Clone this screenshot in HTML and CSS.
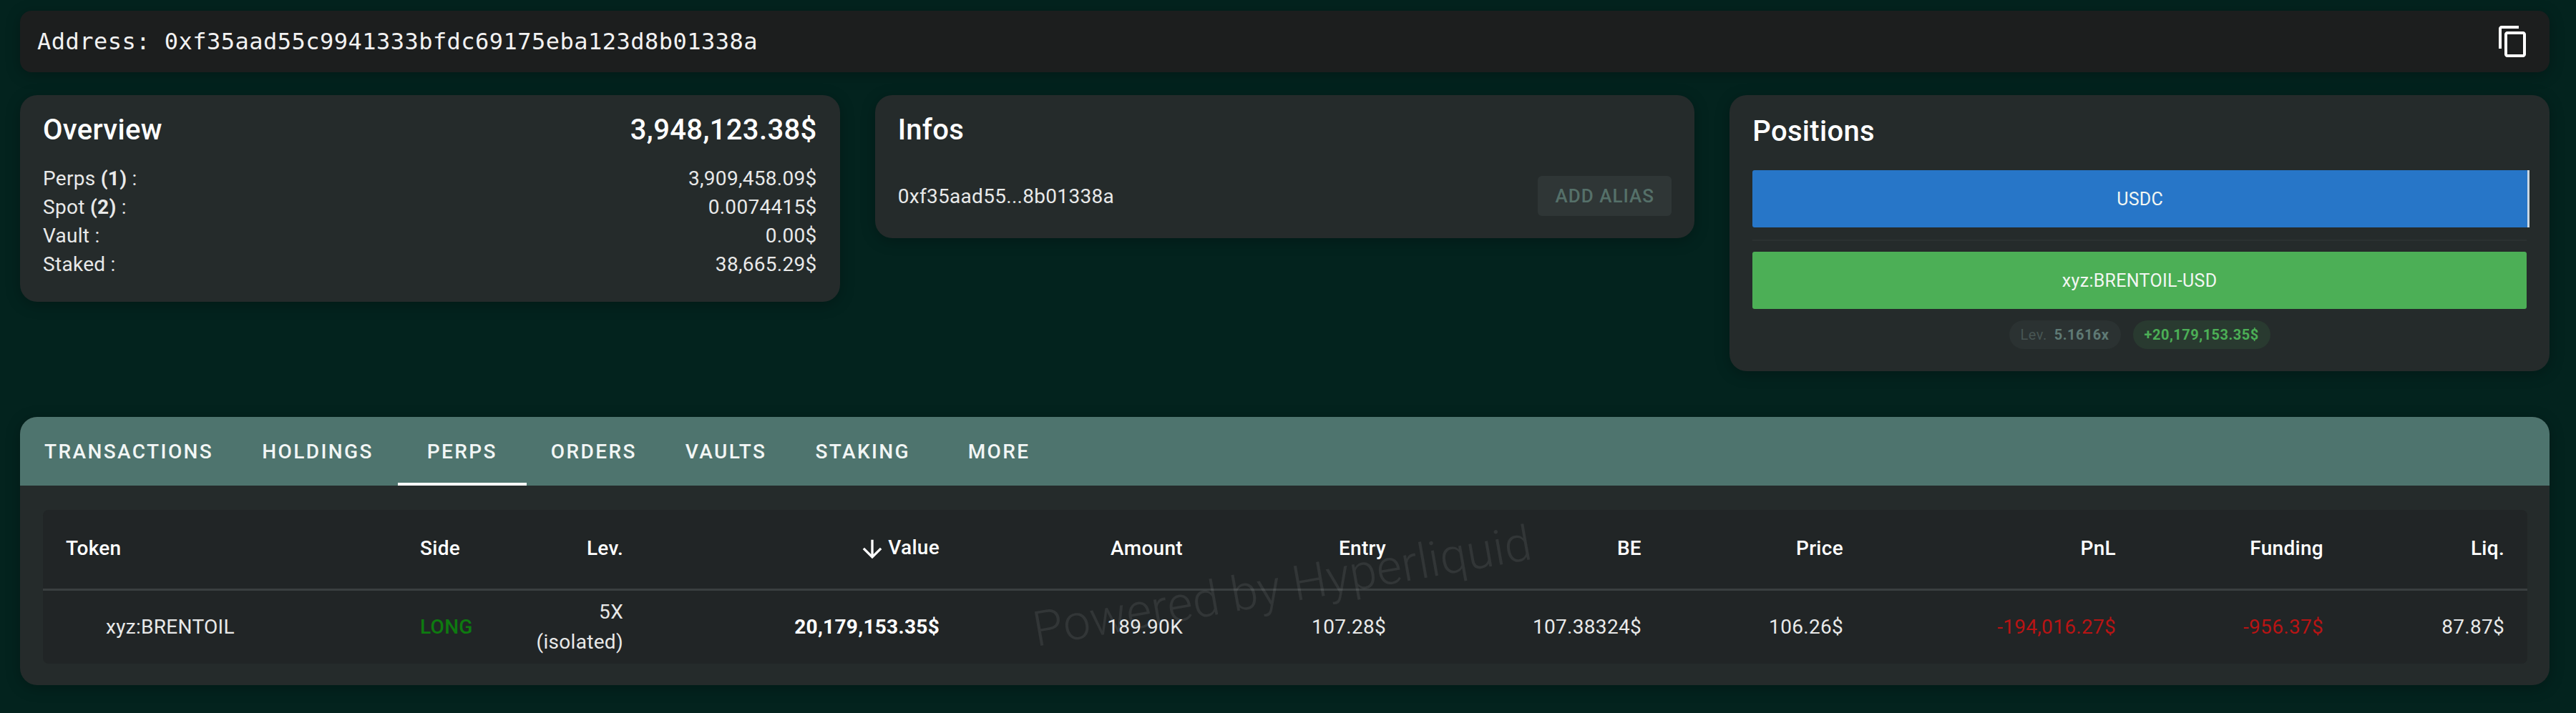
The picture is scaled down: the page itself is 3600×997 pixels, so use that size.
FILE: index.html
```html
<!DOCTYPE html>
<html lang="en">
<head>
  <meta charset="UTF-8">
  <title>Address overview</title>
  <link rel="stylesheet" href="styles.css">
</head>
<body>

<div class="address-bar">
  <span class="address-text">Address: 0xf35aad55c9941333bfdc69175eba123d8b01338a</span>
  <svg class="copy-icon" viewBox="0 0 24 24"><path d="M16 1H4c-1.1 0-2 .9-2 2v14h2V3h12V1zm3 4H8c-1.1 0-2 .9-2 2v14c0 1.1.9 2 2 2h11c1.1 0 2-.9 2-2V7c0-1.1-.9-2-2-2zm0 16H8V7h11v14z"/></svg>
</div>

<div class="panels">
  <div class="card overview">
    <div class="card-head">
      <h2>Overview</h2>
      <span class="total">3,948,123.38$</span>
    </div>
    <div class="stat"><span>Perps <b>(1)</b> :</span><span>3,909,458.09$</span></div>
    <div class="stat"><span>Spot <b>(2)</b> :</span><span>0.0074415$</span></div>
    <div class="stat"><span>Vault :</span><span>0.00$</span></div>
    <div class="stat"><span>Staked :</span><span>38,665.29$</span></div>
  </div>

  <div class="card infos">
    <div class="card-head">
      <h2>Infos</h2>
    </div>
    <div class="info-row">
      <span>0xf35aad55...8b01338a</span>
      <button class="alias-btn">Add alias</button>
    </div>
  </div>

  <div class="card positions">
    <h2>Positions</h2>
    <div class="stack">
      <div class="seg seg-blue">USDC</div>
      <div class="seg-end"></div>
    </div>
    <div class="bar-divider"></div>
    <div class="seg seg-green">xyz:BRENTOIL-USD</div>
    <div class="pills">
      <span class="pill"><span class="pill-label">Lev.</span> <b>5.1616x</b></span>
      <span class="pill pill-green"><b>+20,179,153.35$</b></span>
    </div>
  </div>
</div>

<div class="details">
  <div class="tabs">
    <button class="tab">Transactions</button>
    <button class="tab">Holdings</button>
    <button class="tab active">Perps</button>
    <button class="tab">Orders</button>
    <button class="tab">Vaults</button>
    <button class="tab">Staking</button>
    <button class="tab">More</button>
  </div>

  <div class="table-wrap">
    <table>
      <colgroup>
        <col class="col-token">
        <col class="col-side">
        <col class="col-lev">
        <col class="col-value">
        <col class="col-amount">
        <col class="col-entry">
        <col class="col-be">
        <col class="col-price">
        <col class="col-pnl">
        <col class="col-funding">
        <col class="col-liq">
      </colgroup>
      <thead>
        <tr>
          <th class="left">Token</th>
          <th class="left">Side</th>
          <th>Lev.</th>
          <th><svg class="sort-icon" viewBox="0 0 24 24"><path d="M20 12l-1.41-1.41L13 16.17V4h-2v12.17l-5.58-5.59L4 12l8 8 8-8z"/></svg>Value</th>
          <th>Amount</th>
          <th>Entry</th>
          <th>BE</th>
          <th>Price</th>
          <th>PnL</th>
          <th>Funding</th>
          <th>Liq.</th>
        </tr>
      </thead>
      <tbody>
        <tr>
          <td class="left token-name">xyz:BRENTOIL</td>
          <td class="left long">LONG</td>
          <td>5X<br>(isolated)</td>
          <td class="strong">20,179,153.35$</td>
          <td>189.90K</td>
          <td>107.28$</td>
          <td>107.38324$</td>
          <td>106.26$</td>
          <td class="neg">-194,016.27$</td>
          <td class="neg">-956.37$</td>
          <td>87.87$</td>
        </tr>
      </tbody>
    </table>
    <div class="watermark">Powered by Hyperliquid</div>
  </div>
</div>

</body>
</html>
```

FILE: styles.css
```css
* {
  box-sizing: border-box;
}

body {
  margin: 0;
  padding: 15px 37px 0 28px;
  height: 997px;
  overflow: hidden;
  background-color: #03231e;
  color: #fff;
  font-family: Roboto, "Liberation Sans", sans-serif;
  font-size: 28px;
  letter-spacing: 0.3px;
}

h2 {
  margin: 0;
  font-size: 40px;
  line-height: 48px;
  font-weight: 500;
  letter-spacing: 0.3px;
}

.address-bar {
  display: flex;
  justify-content: space-between;
  align-items: center;
  height: 86px;
  padding: 0 27px 0 24px;
  margin-bottom: 32px;
  background: #1c1e1e;
  border-radius: 16px;
  box-shadow: 0 4px 20px rgba(0,0,0,0.25);
}

.address-text {
  font-family: "DejaVu Sans Mono", monospace;
  font-size: 32px;
  letter-spacing: 0.48px;
  color: #f2f2f2;
}

.copy-icon {
  width: 48px;
  height: 48px;
  fill: #fff;
}

.panels {
  display: grid;
  grid-template-columns: repeat(3, 1fr);
  gap: 49px;
  align-items: start;
  margin-bottom: 64px;
}

.card {
  background: #252b2b;
  border-radius: 24px;
  padding: 25px 32px 32px;
  box-shadow: 0 4px 20px rgba(0,0,0,0.25);
}

.card-head {
  display: flex;
  justify-content: space-between;
  align-items: center;
}

.total {
  font-size: 40px;
  line-height: 48px;
  font-weight: 500;
  letter-spacing: 0.35px;
}

.overview .card-head {
  margin-bottom: 24px;
}

.stat {
  display: flex;
  justify-content: space-between;
  line-height: 40px;
  color: #e8e9e9;
}

.stat b {
  font-weight: 700;
}

.infos {
  padding-bottom: 31px;
}

.infos .card-head {
  margin-bottom: 40px;
}

.info-row {
  display: flex;
  justify-content: space-between;
  align-items: center;
  color: #e8e9e9;
}

.alias-btn {
  width: 187px;
  height: 56px;
  padding: 0;
  border: 0;
  border-radius: 6px;
  background: #2f3636;
  color: #557069;
  font-family: inherit;
  font-size: 26px;
  font-weight: 500;
  letter-spacing: 1px;
  text-transform: uppercase;
}

.positions {
  padding: 27px 32px 31px;
}

.stack {
  display: flex;
  height: 80px;
  margin: 30px -4px 0 0;
}

.seg {
  display: flex;
  justify-content: center;
  align-items: center;
  height: 80px;
  font-size: 25px;
  border-radius: 3px;
  color: #f2f6f2;
}

.seg-blue {
  flex: 1;
  background: #2776c8;
  border-radius: 3px 0 0 3px;
}

.seg-end {
  width: 3px;
  background: #c9d6e2;
}

.seg-green {
  background: #4caf56;
}

.bar-divider {
  height: 2px;
  margin: 17px 0 15px;
  background: #2b3131;
}

.pills {
  display: flex;
  justify-content: center;
  gap: 17px;
  margin-top: 16px;
  font-size: 20px;
}

.pill {
  display: flex;
  align-items: center;
  gap: 10px;
  height: 40px;
  padding: 0 16px;
  border-radius: 20px;
  background: #2b3232;
  color: #5f7a75;
  letter-spacing: 0.5px;
}

.pill-label {
  color: #485654;
}

.pill-green {
  background: #293a30;
  color: #4caf56;
}

.details {
  padding-bottom: 30px;
  background: #252b2b;
  border-radius: 24px;
  overflow: hidden;
  box-shadow: 0 4px 20px rgba(0,0,0,0.25);
}

.tabs {
  display: flex;
  height: 96px;
  margin-bottom: 34px;
  background: #4e746e;
}

.tab {
  min-width: 180px;
  height: 96px;
  padding: 4px 34px 0;
  border: 0;
  border-bottom: 4px solid transparent;
  background: none;
  color: #f2f6f5;
  font-family: inherit;
  font-size: 28px;
  font-weight: 500;
  letter-spacing: 2.4px;
  text-transform: uppercase;
}

.tab.active {
  border-bottom-color: #fff;
}

.table-wrap {
  position: relative;
  margin: 0 31px 0 32px;
  background: #212526;
  border-radius: 8px;
}

table {
  width: 100%;
  table-layout: fixed;
  border-collapse: collapse;
}

.col-token { width: 495px; }
.col-side { width: 145px; }
.col-lev { width: 203px; }
.col-value { width: 442px; }
.col-amount { width: 340px; }
.col-entry { width: 284px; }
.col-be { width: 357px; }
.col-price { width: 282px; }
.col-pnl { width: 381px; }
.col-funding { width: 290px; }
.col-liq { width: 253px; }

th, td {
  padding: 0 32px;
  text-align: right;
  font-size: 28px;
  line-height: 42px;
}

th {
  height: 111px;
  padding-bottom: 2px;
  font-weight: 500;
  border-bottom: 3px solid #3a3f40;
}

td {
  height: 104px;
  color: #e8e9e9;
}

th.left, td.left {
  text-align: left;
}

.token-name {
  padding-left: 88px;
}

.long {
  color: #0e7a10;
  font-weight: 500;
}

.neg {
  color: #b81414;
}

td.strong {
  color: #fff;
  font-weight: 700;
}

.sort-icon {
  width: 40px;
  height: 40px;
  margin-right: 2px;
  fill: #fff;
  vertical-align: middle;
}

.watermark {
  position: absolute;
  left: 1379px;
  top: 67px;
  color: rgba(255,255,255,0.08);
  font-size: 68px;
  font-weight: 300;
  line-height: 80px;
  white-space: nowrap;
  transform: rotate(-10deg);
  pointer-events: none;
}
```
